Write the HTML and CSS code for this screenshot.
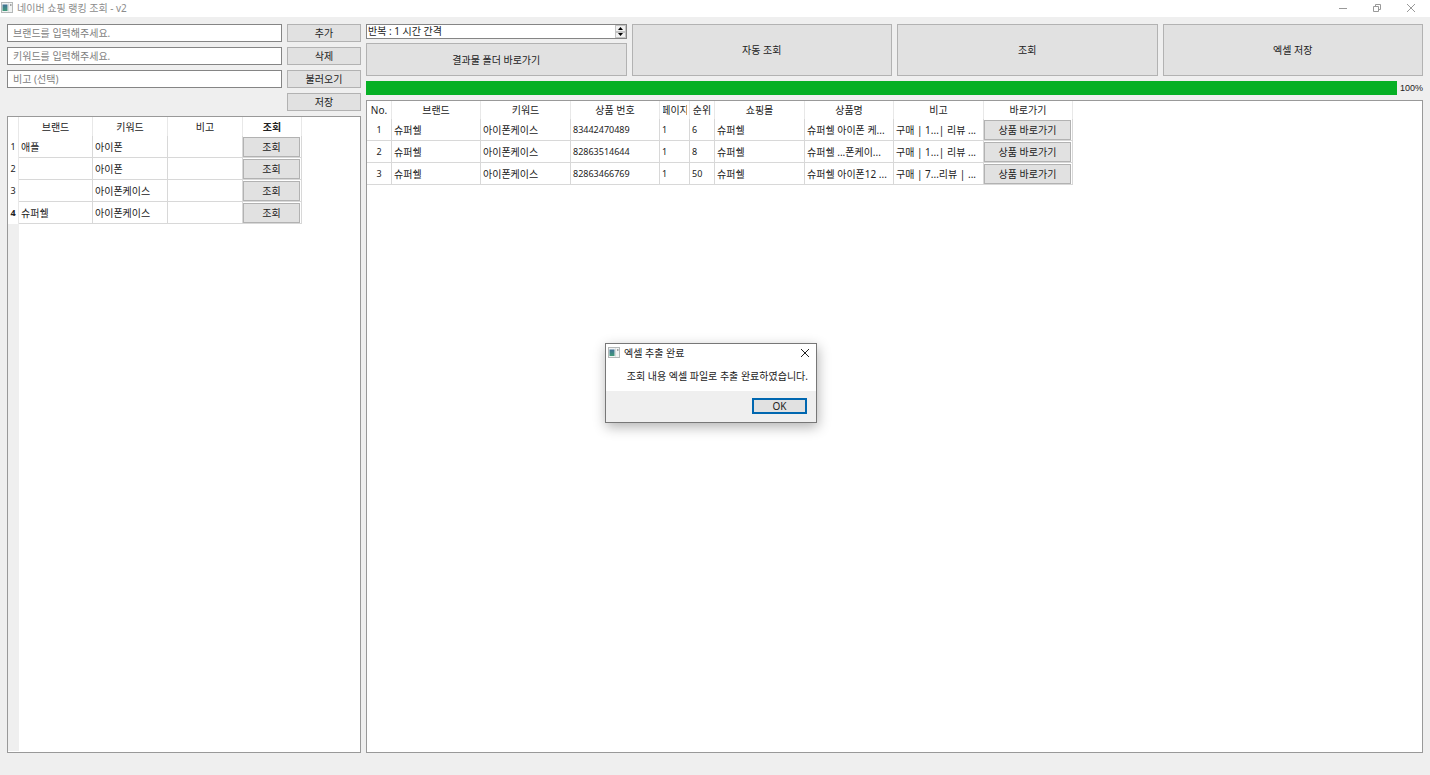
FILE: index.html
```html
<!DOCTYPE html>
<html lang="ko">
<head>
<meta charset="utf-8">
<title>네이버 쇼핑 랭킹 조회 - v2</title>
<link rel="stylesheet" href="styles.css">
</head>
<body>
<svg class="defs" aria-hidden="true">
  <defs>
    <linearGradient id="teal" x1="0" y1="0" x2="0" y2="1"><stop offset="0" stop-color="#3f6f96"/><stop offset="1" stop-color="#3f9a78"/></linearGradient>
    <symbol id="app" viewBox="0 0 12 11">
      <rect x="0.5" y="0.5" width="11" height="10" fill="#f1f3f3" stroke="#b4b8b8"/>
      <rect x="1.5" y="2.5" width="5" height="6.5" fill="url(#teal)"/>
      <path d="M7.5 1.5v8" stroke="#d5d8d8"/>
      <path d="M9 3h1.5" stroke="#555"/>
    </symbol>
  </defs>
</svg>
<header class="titlebar">
  <svg class="app-icon"><use href="#app"/></svg>
  <h1 class="title">네이버 쇼핑 랭킹 조회 - v2</h1>
  <div class="window-buttons">
    <button class="win" aria-label="최소화"><svg width="10" height="10"><path d="M1 5.5h8"/></svg></button>
    <button class="win" aria-label="이전 크기로"><svg width="10" height="10"><path d="M1.5 3.5h5v5h-5zM3.5 3.5v-2h5v5h-2"/></svg></button>
    <button class="win" aria-label="닫기"><svg width="10" height="10"><path d="M1 1l8 8M9 1l-8 8"/></svg></button>
  </div>
</header>
<main class="main">
  <section class="left">
    <form class="entry">
      <input class="field" type="text" aria-label="브랜드" placeholder="브랜드를 입력해주세요.">
      <button class="btn" type="button">추가</button>
      <input class="field" type="text" aria-label="키워드" placeholder="키워드를 입력해주세요.">
      <button class="btn" type="button">삭제</button>
      <input class="field" type="text" aria-label="비고" placeholder="비고 (선택)">
      <button class="btn" type="button">불러오기</button>
      <button class="btn save" type="button">저장</button>
    </form>
    <div class="panel">
      <table class="grid keywords">
        <colgroup><col class="w11"><col class="w74"><col class="w75"><col class="w75"><col class="w59"></colgroup>
        <thead><tr><th></th><th>브랜드</th><th>키워드</th><th>비고</th><th class="active">조회</th></tr></thead>
        <tbody>
          <tr><th class="idx" scope="row">1</th><td>애플</td><td>아이폰</td><td></td><td class="action"><button class="btn cell">조회</button></td></tr>
          <tr><th class="idx" scope="row">2</th><td></td><td>아이폰</td><td></td><td class="action"><button class="btn cell">조회</button></td></tr>
          <tr><th class="idx" scope="row">3</th><td></td><td>아이폰케이스</td><td></td><td class="action"><button class="btn cell">조회</button></td></tr>
          <tr><th class="idx active" scope="row">4</th><td>슈퍼쉘</td><td>아이폰케이스</td><td></td><td class="action"><button class="btn cell">조회</button></td></tr>
        </tbody>
      </table>
      <div class="gutter"></div>
    </div>
  </section>
  <section class="right">
    <div class="toolbar">
      <div class="stack">
        <div class="spin">
          <input class="spin-text" type="text" aria-label="반복 간격" value="반복 : 1 시간 간격">
          <div class="spin-buttons">
            <button class="step" aria-label="증가"><svg width="5" height="3"><path d="M0 3l2.500-3 2.500 3z"/></svg></button>
            <button class="step" aria-label="감소"><svg width="5" height="3"><path d="M0 0l2.500 3 2.500-3z"/></svg></button>
          </div>
        </div>
        <button class="btn folder">결과물 폴더 바로가기</button>
      </div>
      <button class="btn">자동 조회</button>
      <button class="btn">조회</button>
      <button class="btn">엑셀 저장</button>
    </div>
    <div class="progress">
      <div class="track" role="progressbar" aria-label="진행률" aria-valuenow="100"><div class="bar" style="width:100%"></div></div>
      <span class="percent">100%</span>
    </div>
    <div class="panel">
      <table class="grid results">
        <colgroup><col class="w25"><col class="w89"><col class="w90"><col class="w89"><col class="w30"><col class="w25"><col class="w90"><col class="w89"><col class="w90"><col class="w89"></colgroup>
        <thead><tr><th>No.</th><th>브랜드</th><th>키워드</th><th>상품 번호</th><th><div class="clip">페이지</div></th><th>순위</th><th>쇼핑몰</th><th>상품명</th><th>비고</th><th>바로가기</th></tr></thead>
        <tbody>
          <tr><td class="no">1</td><td>슈퍼쉘</td><td>아이폰케이스</td><td class="num">83442470489</td><td class="num">1</td><td class="num">6</td><td>슈퍼쉘</td><td>슈퍼쉘 아이폰 케...</td><td>구매 | 1...| 리뷰 ...</td><td class="action"><button class="btn cell">상품 바로가기</button></td></tr>
          <tr><td class="no">2</td><td>슈퍼쉘</td><td>아이폰케이스</td><td class="num">82863514644</td><td class="num">1</td><td class="num">8</td><td>슈퍼쉘</td><td>슈퍼쉘 ...폰케이...</td><td>구매 | 1...| 리뷰 ...</td><td class="action"><button class="btn cell">상품 바로가기</button></td></tr>
          <tr><td class="no">3</td><td>슈퍼쉘</td><td>아이폰케이스</td><td class="num">82863466769</td><td class="num">1</td><td class="num">50</td><td>슈퍼쉘</td><td>슈퍼쉘 아이폰12 ...</td><td>구매 | 7...리뷰 | ...</td><td class="action"><button class="btn cell">상품 바로가기</button></td></tr>
        </tbody>
      </table>
    </div>
  </section>
</main>
<div class="dialog" role="dialog" aria-labelledby="dialog-title">
  <div class="dialog-head">
    <svg class="app-icon"><use href="#app"/></svg>
    <h2 class="dialog-title" id="dialog-title">엑셀 추출 완료</h2>
    <button class="win dark" aria-label="닫기"><svg width="10" height="10"><path d="M1 1l8 8M9 1l-8 8"/></svg></button>
  </div>
  <p class="message">조회 내용 엑셀 파일로 추출 완료하였습니다.</p>
  <div class="dialog-foot"><button class="btn ok">OK</button></div>
</div>
</body>
</html>
```
FILE: styles.css
```css
* { box-sizing: border-box; }
body {
  margin: 0;
  height: 100vh;
  display: flex;
  flex-direction: column;
  position: relative;
  overflow: hidden;
  background: #efefef;
  color: #222;
  font: 10px/14px "Noto Sans", "Noto Sans CJK KR", sans-serif;
}
button, input { font: inherit; color: inherit; margin: 0; border-radius: 0; }
.defs { position: absolute; width: 0; height: 0; }

.titlebar {
  display: flex;
  align-items: center;
  height: 17px;
  padding: 0 8px 2px 1px;
  background: #fff;
}
.app-icon { width: 12px; height: 11px; flex: none; }
.title { margin: 0 0 0 4px; font-size: 10px; font-weight: 400; color: #8c8c8c; }
.window-buttons { margin-left: auto; display: flex; gap: 12px; }
.win {
  display: grid;
  place-items: center;
  width: 22px;
  height: 16px;
  padding: 0;
  border: 0;
  background: none;
}
.win svg { fill: none; stroke: #999; }
.win.dark svg { stroke: #222; }

.main {
  flex: 1;
  min-height: 0;
  display: grid;
  grid-template-columns: 354px 1fr;
  gap: 5px;
  padding: 7px 7px 22px;
}
.left, .right { display: flex; flex-direction: column; min-width: 0; min-height: 0; }
.entry {
  display: grid;
  grid-template-columns: 1fr 74px;
  grid-auto-rows: 18px;
  gap: 5px;
  padding-bottom: 5px;
}
.field {
  min-width: 0;
  padding: 0 5px;
  border: 1px solid #858585;
  background: #fff;
}
.field::placeholder { color: #808080; opacity: 1; }
.btn {
  min-width: 0;
  padding: 0;
  border: 1px solid #b2b2b2;
  background: #e1e1e1;
  white-space: nowrap;
}
.save { grid-column: 2; }

.panel {
  flex: 1;
  min-height: 0;
  display: flex;
  flex-direction: column;
  align-items: flex-start;
  border: 1px solid #999;
  background: #fff;
}
.gutter { flex: 1; width: 11px; margin-bottom: 1px; background: #efefef; }

.grid { table-layout: fixed; border-collapse: separate; border-spacing: 0; }
.keywords { width: 294px; }
.results { width: 706px; }
.w11 { width: 11px; }
.w25 { width: 25px; }
.w30 { width: 30px; }
.w59 { width: 59px; }
.w74 { width: 74px; }
.w75 { width: 75px; }
.w89 { width: 89px; }
.w90 { width: 90px; }
.grid th, .grid td { padding: 0 2px; overflow: hidden; white-space: nowrap; }
.grid th { height: 18px; padding: 0; border-right: 1px solid #e8e8e8; font-weight: 400; }
.keywords thead th { height: 19px; }
.grid td {
  height: 22px;
  border-right: 1px solid #d8d8d8;
  border-bottom: 1px solid #d8d8d8;
}
.grid th.active { font-weight: 700; }
.grid td.action { padding: 0 1px 0 0; }
.grid td.no { text-align: center; font-size: 9px; }
.grid td.num { font-size: 9px; }
.grid .idx { font-size: 9px; }
.cell { display: block; width: 100%; height: 20px; }
.clip { display: flex; justify-content: center; margin: 0 2px 0 3px; overflow: hidden; }

.toolbar {
  display: grid;
  grid-template-columns: repeat(4, minmax(0, 1fr));
  gap: 5px;
  height: 52px;
}
.stack { display: flex; flex-direction: column; gap: 4px; }
.spin { display: flex; height: 15px; border: 1px solid #858585; background: #fff; }
.spin-text { flex: 1; min-width: 0; padding: 0 1px 1px; border: 0; background: none; line-height: 12px; }
.spin-buttons { display: flex; flex-direction: column; width: 11px; }
.step {
  flex: 1;
  display: grid;
  place-items: center;
  min-height: 0;
  padding: 0;
  border: 1px solid #c4c4c4;
  background: #f0f0f0;
}
.folder { flex: 1; }

.progress { display: flex; align-items: center; gap: 3px; height: 24px; }
.track { flex: 1; height: 14px; background: #e6e6e6; }
.bar { height: 100%; background: #06b025; }
.percent { width: 23px; font-family: "Liberation Sans Narrow", "Liberation Sans", sans-serif; font-size: 9px; }

.dialog {
  position: absolute;
  left: 605px;
  top: 343px;
  width: 212px;
  border: 1px solid #777;
  background: #fff;
  box-shadow: 1px 4px 12px rgba(0, 0, 0, 0.3);
}
.dialog-head { display: flex; align-items: center; height: 17px; padding-left: 2px; }
.dialog-title { margin: 0 auto 0 4px; font-size: 10px; font-weight: 400; }
.message { margin: 0; padding: 8px 8px; text-align: right; white-space: nowrap; }
.dialog-foot { display: flex; justify-content: flex-end; padding: 7px 9px 8px; background: #efefef; }
.ok { width: 55px; height: 16px; border: 2px solid #0067b0; line-height: 12px; }
```
